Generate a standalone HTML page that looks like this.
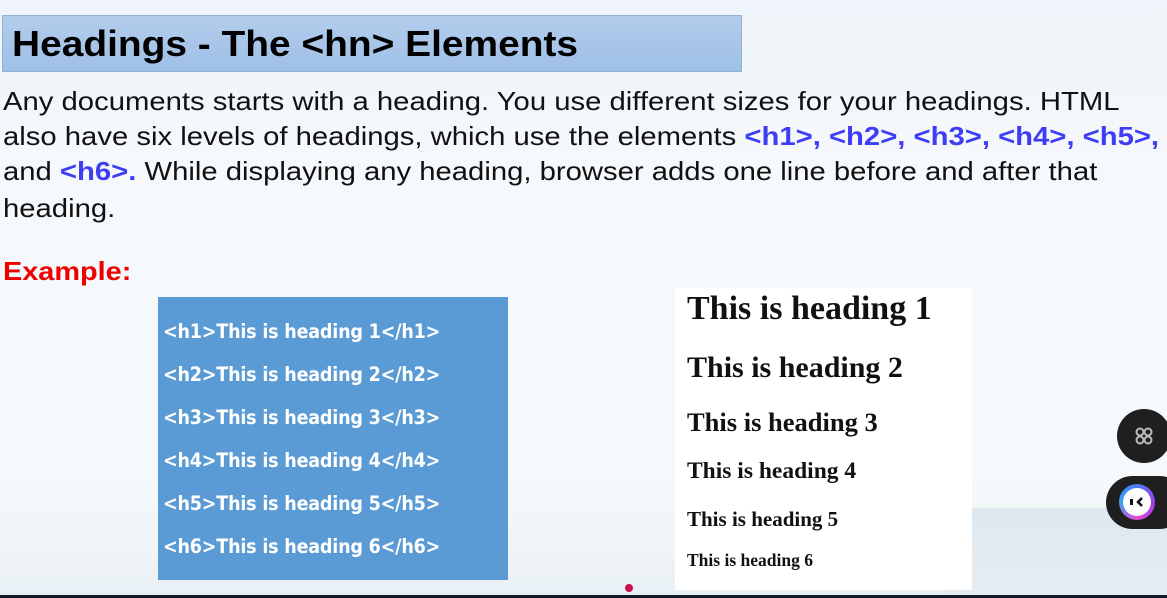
<!DOCTYPE html>
<html><head><meta charset="utf-8"><style>
html,body{margin:0;padding:0}
body{width:1167px;height:598px;position:relative;overflow:hidden;font-family:"Liberation Sans",sans-serif;
background:linear-gradient(180deg,#eef4f9 0%,#f6f9fc 30%,#f5f9fc 80%,#e9f0f5 100%);}
.lowbg{position:absolute;left:940px;top:508px;width:227px;height:90px;background:linear-gradient(180deg,#dfe8ef,#e6edf2)}
.t{position:absolute;white-space:nowrap;line-height:1;transform-origin:0 0}
.title{position:absolute;left:2px;top:15px;width:738px;height:55px;background:linear-gradient(180deg,#b3cdec,#9fbfe6);border:1px solid #8fb0d8}
.body{font-size:26px;color:#111;transform:scaleX(1.125)}
.b{color:#3d3df5;font-weight:bold}
.lb{position:absolute;left:158px;top:297px;width:350px;height:283px;background:#5b9bd5}
.lb .t{color:#fff;font-weight:bold;font-size:19.5px;left:5px;font-family:"DejaVu Sans Condensed","Liberation Sans",sans-serif;letter-spacing:-0.2px}
.rb{position:absolute;left:675px;top:288px;width:297px;height:302px;background:#fff}
.rb .t{font-family:"Liberation Serif",serif;font-weight:bold;color:#111;left:12px}
</style></head><body>
<div class="lowbg"></div>
<div class="title"></div>
<div class="t" style="left:12px;top:26px;font-size:36px;font-weight:bold;color:#000;transform:scaleX(1.08)">Headings - The &lt;hn&gt; Elements</div>
<div class="t body" style="left:3px;top:88px">Any documents starts with a heading. You use different sizes for your headings. HTML</div>
<div class="t body" style="left:3px;top:123px">also have six levels of headings, which use the elements <span class="b">&lt;h1&gt;, &lt;h2&gt;, &lt;h3&gt;, &lt;h4&gt;, &lt;h5&gt;,</span></div>
<div class="t body" style="left:3px;top:158px">and <span class="b">&lt;h6&gt;.</span> While displaying any heading, browser adds one line before and after that</div>
<div class="t body" style="left:3px;top:195px">heading.</div>
<div class="t" style="left:3px;top:258px;font-size:26px;font-weight:bold;color:#ee0000;transform:scaleX(1.11)">Example:</div>
<div class="lb">
<div class="t" style="top:25px">&lt;h1&gt;This is heading 1&lt;/h1&gt;</div>
<div class="t" style="top:68px">&lt;h2&gt;This is heading 2&lt;/h2&gt;</div>
<div class="t" style="top:111px">&lt;h3&gt;This is heading 3&lt;/h3&gt;</div>
<div class="t" style="top:154px">&lt;h4&gt;This is heading 4&lt;/h4&gt;</div>
<div class="t" style="top:197px">&lt;h5&gt;This is heading 5&lt;/h5&gt;</div>
<div class="t" style="top:240px">&lt;h6&gt;This is heading 6&lt;/h6&gt;</div>
</div>
<div class="rb">
<div class="t" style="top:4px;font-size:34px">This is heading 1</div>
<div class="t" style="top:65px;font-size:30px">This is heading 2</div>
<div class="t" style="top:121px;font-size:26.5px">This is heading 3</div>
<div class="t" style="top:172px;font-size:23.5px">This is heading 4</div>
<div class="t" style="top:221px;font-size:21px">This is heading 5</div>
<div class="t" style="top:264px;font-size:17.5px">This is heading 6</div>
</div>
<div style="position:absolute;left:625px;top:584px;width:8px;height:8px;border-radius:50%;background:#c8104a"></div>
<div style="position:absolute;left:0;top:595px;width:1167px;height:3px;background:#111a2a"></div>
<div style="position:absolute;left:1117px;top:409px;width:54px;height:54px;border-radius:50%;background:#1f1f1f">
<svg width="54" height="54" viewBox="0 0 54 54" fill="none" stroke="#bbb" stroke-width="2"><circle cx="23" cy="23" r="3.5"/><circle cx="31" cy="23" r="3.5"/><circle cx="23" cy="31" r="3.5"/><circle cx="31" cy="31" r="3.5"/></svg></div>
<div style="position:absolute;left:1106px;top:476px;width:80px;height:53px;border-radius:27px;background:#1f1f1f"></div>
<div style="position:absolute;left:1119px;top:484px;width:36px;height:36px;border-radius:50%;background:conic-gradient(#4b7bf5,#9b3cf0,#e94bd8,#3aa0f5,#4b7bf5)">
<div style="position:absolute;left:4px;top:4px;width:28px;height:28px;border-radius:50%;background:#fff"></div>
<div style="position:absolute;left:11px;top:15px;width:3px;height:6px;background:#111"></div>
<svg style="position:absolute;left:17px;top:13px" width="8" height="10"><path d="M6 1L2 5L6 9" stroke="#111" stroke-width="2.5" fill="none"/></svg>
</div>
</body></html>
